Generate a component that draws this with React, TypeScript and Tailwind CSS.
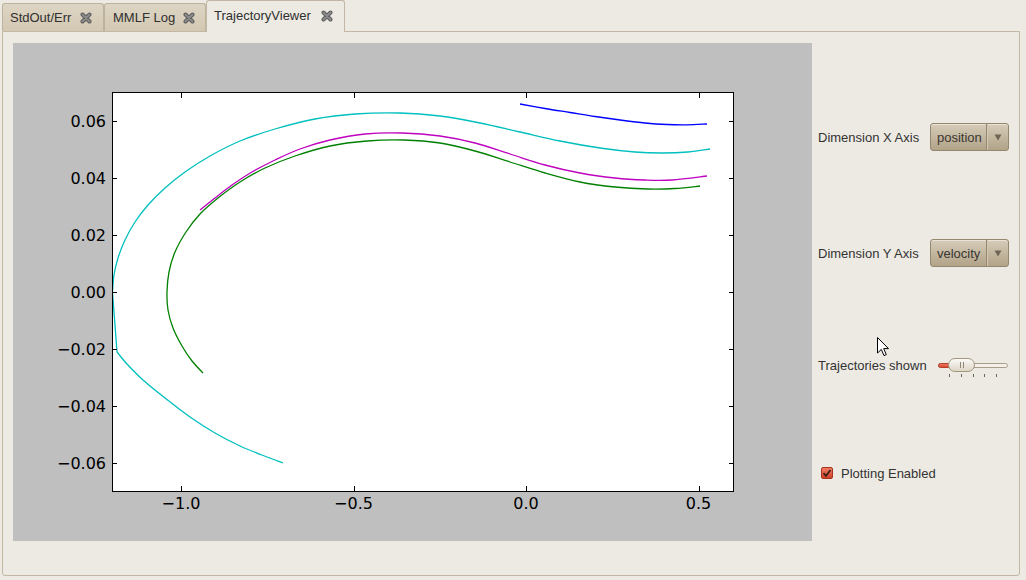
import React from "react";

type P = [number, number];

function smooth(pts: P[]): string {
  let d = `M${pts[0][0]},${pts[0][1]}`;
  for (let i = 0; i < pts.length - 1; i++) {
    const p0 = pts[i - 1] || pts[i];
    const p1 = pts[i];
    const p2 = pts[i + 1];
    const p3 = pts[i + 2] || p2;
    const c1x = p1[0] + (p2[0] - p0[0]) / 6;
    const c1y = p1[1] + (p2[1] - p0[1]) / 6;
    const c2x = p2[0] - (p3[0] - p1[0]) / 6;
    const c2y = p2[1] - (p3[1] - p1[1]) / 6;
    d += ` C${c1x.toFixed(2)},${c1y.toFixed(2)} ${c2x.toFixed(2)},${c2y.toFixed(2)} ${p2[0]},${p2[1]}`;
  }
  return d;
}

const cyanLower: P[] = [[283,463],[262,455],[240,446],[215,433],[190,417],[165,398],[143,380],[127,364],[117,352]];
const cyanUpper: P[] = [[112.5,292],[114,275],[118,258],[125,240],[135,222],[148,205],[165,188],[185,172],[210,156],[240,141],[275,129],[315,119],[355,114],[400,113],[440,116],[480,123],[520,132],[560,141],[600,148],[635,152],[662,153],[688,152],[710,149]];
const magenta: P[] = [[200,210],[215,198],[232,185],[252,172],[275,160],[300,149],[330,140],[365,134],[402,133],[440,136],[475,143],[510,154],[545,165],[580,173],[615,178],[645,180],[672,180],[707,176]];
const green: P[] = [[203,373],[192,361],[182,346],[173,328],[168,310],[167,292],[169,272],[175,252],[186,232],[200,214],[218,198],[240,182],[265,168],[295,156],[330,146],[367,141],[404,140],[440,143],[475,151],[510,162],[545,173],[580,182],[615,187],[648,189],[675,188.5],[700,186]];
const blue: P[] = [[520,104],[545,108.5],[570,112.5],[595,116.5],[620,120],[645,123],[667,124.5],[687,124.8],[707,124]];

const xpx = (v: number) => 112 + (v + 1.2) * 345;
const ypx = (v: number) => 292 - v * 2850;

const xticks: [number, string][] = [[-1.0, "\u22121.0"], [-0.5, "\u22120.5"], [0, "0.0"], [0.5, "0.5"]];
const yticks: [number, string][] = [
  [0.06, "0.06"], [0.04, "0.04"], [0.02, "0.02"], [0, "0.00"],
  [-0.02, "\u22120.02"], [-0.04, "\u22120.04"], [-0.06, "\u22120.06"],
];

function CloseIcon() {
  return (
    <svg width="12" height="12" viewBox="0 0 12 12">
      <path d="M2.5,2.5 L9.5,9.5 M9.5,2.5 L2.5,9.5" stroke="#5c5c5c" strokeWidth="4" strokeLinecap="round" />
      <path d="M2.5,2.5 L9.5,9.5 M9.5,2.5 L2.5,9.5" stroke="#8c8c8c" strokeWidth="2" strokeLinecap="round" />
    </svg>
  );
}

function Plot() {
  return (
    <svg width="799" height="498" viewBox="13 43 799 498" className="block">
      <defs>
        <clipPath id="axclip">
          <rect x="112.5" y="92.5" width="621" height="399" />
        </clipPath>
      </defs>
      <rect x="112.5" y="92.5" width="621" height="399" fill="#ffffff" />
      <g clipPath="url(#axclip)" fill="none" strokeWidth="1.3" strokeLinejoin="round">
        <path d={smooth(cyanLower) + " L112.5,292 " + smooth(cyanUpper).replace(/^M[^ ]+/, "")} stroke="#00bfbf" />
        <path d={smooth(magenta)} stroke="#bf00bf" />
        <path d={smooth(green)} stroke="#008000" />
        <path d={smooth(blue)} stroke="#0000ff" />
      </g>
      <g stroke="#000" strokeWidth="1" shapeRendering="crispEdges">
        {xticks.map(([v]) => {
          const x = Math.round(xpx(v)) + 0.5;
          return (
            <g key={v}>
              <line x1={x} y1={491} x2={x} y2={486} />
              <line x1={x} y1={93} x2={x} y2={98} />
            </g>
          );
        })}
        {yticks.map(([v]) => {
          const y = Math.round(ypx(v)) + 0.5;
          return (
            <g key={v}>
              <line x1={113} y1={y} x2={117} y2={y} />
              <line x1={733} y1={y} x2={729} y2={y} />
            </g>
          );
        })}
      </g>
      <rect x="112.5" y="92.5" width="621" height="399" fill="none" stroke="#000" strokeWidth="1" shapeRendering="crispEdges" />
      <g fontFamily="'DejaVu Sans', sans-serif" fontSize="16" fill="#000">
        {xticks.map(([v, t]) => (
          <text key={v} x={xpx(v)} y={509} textAnchor="middle">{t}</text>
        ))}
        {yticks.map(([v, t]) => (
          <text key={v} x={106} y={ypx(v) + 6} textAnchor="end">{t}</text>
        ))}
      </g>
    </svg>
  );
}

function Combo({ value }: { value: string }) {
  return (
    <div className="w-[79px] h-[28px] flex items-stretch rounded-[3px] border border-[#94876f] bg-gradient-to-b from-[#d6ccb8] to-[#b1a388] shadow-[inset_0_1px_0_rgba(255,255,255,0.45)]">
      <div className="flex-1 flex items-center pl-[6px] pt-[1px] text-[13px] text-[#3a3632]">{value}</div>
      <div className="w-px bg-[#94876f]" />
      <div className="w-px bg-[#d3c9b5]" />
      <div className="w-[20px] flex items-center justify-center">
        <svg width="8" height="7" viewBox="0 0 8 7">
          <path d="M0.5,0.5 L7.5,0.5 L4,6.5 Z" fill="#6f6656" />
        </svg>
      </div>
    </div>
  );
}

function Slider() {
  return (
    <div className="relative w-[71px] h-[28px]">
      <div className="absolute left-[1px] top-[12px] w-[70px] h-[5px] rounded-full border border-[#a89d88] bg-[#f3f0ea]" />
      <div className="absolute left-[1px] top-[12px] w-[14px] h-[5px] rounded-l-full border border-[#b2402c] bg-gradient-to-b from-[#f07a63] to-[#d9442c]" />
      <div className="absolute left-[11px] top-[7px] w-[27px] h-[14px] rounded-full border border-[#a3987f] bg-gradient-to-b from-[#fbfaf7] to-[#ddd6c7] flex items-center justify-center gap-[2px]">
        <div className="w-px h-[6px] bg-[#8e8575]" />
        <div className="w-px h-[6px] bg-[#8e8575]" />
      </div>
      {[12, 24, 36, 47, 59].map((l) => (
        <div key={l} className="absolute top-[23px] w-px h-[3px] bg-[#6e675c]" style={{ left: l }} />
      ))}
    </div>
  );
}

export default function App() {
  return (
    <div
      className="relative w-[1026px] h-[580px] bg-[#edeae3] overflow-hidden text-[#333]"
      style={{ fontFamily: "'Liberation Sans', Arial, sans-serif" }}
    >
      {/* tabs */}
      <div className="relative z-10 flex items-end h-[31px] pl-[2px]">
        <div className="w-[102px] h-[28px] flex items-center pl-[7px] gap-[9px] rounded-t-[3px] border border-b-0 border-[#bdb29b] bg-gradient-to-b from-[#ddd5c4] to-[#d3c8b2] text-[13px] text-[#2f2f2f]">
          <span>StdOut/Err</span>
          <CloseIcon />
        </div>
        <div className="w-[102px] h-[28px] flex items-center pl-[8px] gap-[8px] rounded-t-[3px] border border-b-0 border-[#bdb29b] bg-gradient-to-b from-[#ddd5c4] to-[#d3c8b2] text-[13px] text-[#2f2f2f]">
          <span>MMLF Log</span>
          <CloseIcon />
        </div>
        <div className="w-[139px] h-[32px] -mb-px flex items-center pl-[7px] gap-[10px] pb-[1px] rounded-t-[3px] border border-b-0 border-[#c2b8a3] bg-[#edeae3] text-[13px] text-[#2f2f2f]">
          <span>TrajectoryViewer</span>
          <CloseIcon />
        </div>
      </div>
      {/* pane */}
      <div className="ml-[2px] w-[1018px] h-[545px] border border-[#c2b8a3] rounded-b-[3px] flex pl-[10px] pt-[11px]">
        <div className="w-[799px] h-[498px] bg-[#bfbfbf] shrink-0">
          <Plot />
        </div>
        <div className="flex flex-col pl-[6px] text-[13px] text-[#333]">
          <div className="mt-[80px] h-[28px] flex items-center">
            <span className="w-[112px] pt-[1px]">Dimension X Axis</span>
            <Combo value="position" />
          </div>
          <div className="mt-[88px] h-[28px] flex items-center">
            <span className="w-[112px] pt-[1px]">Dimension Y Axis</span>
            <Combo value="velocity" />
          </div>
          <div className="mt-[84px] h-[28px] flex items-center">
            <span className="w-[119px] pt-[1px]">Trajectories shown</span>
            <Slider />
          </div>
          <div className="mt-[80px] h-[28px] flex items-center pl-[3px] gap-[8px]">
            <div className="w-[12px] h-[12px] rounded-[2px] border border-[#a8321d] bg-gradient-to-b from-[#f07c63] to-[#d0402a] flex items-center justify-center">
              <svg width="10" height="10" viewBox="0 0 10 10">
                <path d="M1.5,5.2 L4,7.8 L8.5,2" fill="none" stroke="#3b1f18" strokeWidth="1.8" />
              </svg>
            </div>
            <span className="pt-[1px]">Plotting Enabled</span>
          </div>
        </div>
      </div>
      {/* mouse cursor */}
      <svg className="absolute left-[877px] top-[337px]" width="13" height="21" viewBox="0 0 13 21">
        <path d="M0.5,0.5 L0.5,16 L4.3,12.4 L7,18.6 L9.3,17.6 L6.7,11.6 L11.5,11.6 Z" fill="#fff" stroke="#000" strokeWidth="1" strokeLinejoin="round" />
      </svg>
    </div>
  );
}
